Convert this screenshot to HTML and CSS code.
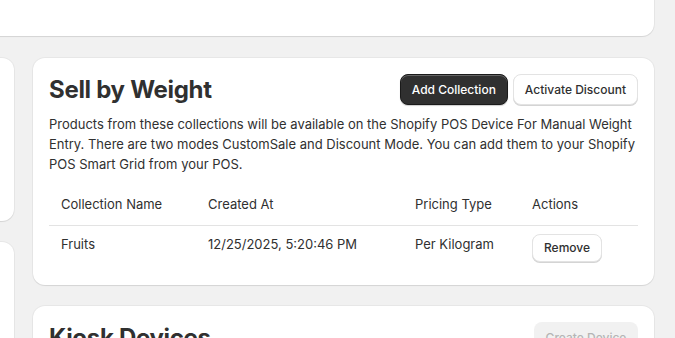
FILE: index.html
```html
<!DOCTYPE html>
<html lang="en">
<head>
<meta charset="utf-8">
<title>Sell by Weight</title>
<link rel="stylesheet" href="styles.css">
</head>
<body>
<div class="page">
  <section class="card top-card"></section>
  <div class="columns">
    <div class="col">
      <section class="card side-card-1"></section>
      <section class="card side-card-2"></section>
    </div>
    <div class="col">
      <section class="card">
        <div class="card-head">
          <h2 class="title">Sell by Weight</h2>
          <div class="btn-group">
            <button class="btn btn-primary">Add Collection</button>
            <button class="btn btn-secondary">Activate Discount</button>
          </div>
        </div>
        <p class="desc">Products from these collections will be available on the Shopify POS Device For Manual Weight Entry. There are two modes CustomSale and Discount Mode. You can add them to your Shopify POS Smart Grid from your POS.</p>
        <div class="table">
          <div class="tr th-row">
            <div class="cell">Collection Name</div>
            <div class="cell">Created At</div>
            <div class="cell">Pricing Type</div>
            <div class="cell">Actions</div>
          </div>
          <div class="tr td-row">
            <div class="cell">Fruits</div>
            <div class="cell">12/25/2025, 5:20:46 PM</div>
            <div class="cell">Per Kilogram</div>
            <div class="cell"><button class="btn btn-secondary btn-sm">Remove</button></div>
          </div>
        </div>
      </section>
      <section class="card kiosk-card">
        <div class="card-head">
          <h2 class="title">Kiosk Devices</h2>
          <div class="btn-group">
            <button class="btn btn-disabled" disabled>Create Device</button>
          </div>
        </div>
      </section>
    </div>
  </div>
</div>
</body>
</html>
```
FILE: styles.css
```css
* { box-sizing: border-box; }
html, body { margin: 0; padding: 0; }
body {
  background: #f1f1f1;
  font-family: Inter, "Noto Sans", sans-serif;
  color: #303030;
  font-size: 13px;
  line-height: 20px;
  overflow: hidden;
  height: 338px;
}
.page {
  display: flex;
  flex-direction: column;
  gap: 22px;
  margin: -64px 21px 0 -200px;
}
.card {
  background: #fff;
  border-radius: 12px;
  box-shadow: 0 1px 1px rgba(0,0,0,0.08), 0 0 0 1px rgba(0,0,0,0.04);
  padding: 16px;
}
.top-card { height: 100px; }
.columns {
  display: grid;
  grid-template-columns: 214px 621px;
  column-gap: 19px;
}
.col {
  display: flex;
  flex-direction: column;
  gap: 21px;
}
.side-card-1 { height: 163px; }
.side-card-2 { height: 200px; }
.card-head {
  display: flex;
  align-items: center;
  justify-content: space-between;
  height: 31px;
}
.title {
  margin: 0;
  font-size: 24px;
  line-height: 32px;
  font-weight: 700;
  letter-spacing: -0.3px;
  color: #303030;
}
.btn-group {
  display: flex;
  gap: 5px;
}
.btn {
  font-family: Inter, "Noto Sans", sans-serif;
  font-size: 12px;
  font-weight: 550;
  line-height: 16px;
  height: 31px;
  padding: 0 11px;
  border-radius: 8px;
  cursor: pointer;
  white-space: nowrap;
}
.btn-primary {
  background: #303030;
  color: #fff;
  border: 1px solid #1a1a1a;
  box-shadow: inset 0 1px 0 rgba(255,255,255,0.25), 0 1px 1px rgba(0,0,0,0.2);
}
.btn-secondary {
  background: #fff;
  color: #303030;
  border: 1px solid #e3e3e3;
  box-shadow: 0 1px 0 #d4d4d4;
}
.btn-sm {
  height: 28px;
  padding: 0 11px;
  font-weight: 500;
}
.btn-disabled {
  background: #f1f1f1;
  color: #b5b5b5;
  border: none;
  min-width: 104px;
}
.desc {
  margin: 9px 0 0;
}
.table {
  margin-top: 8px;
}
.tr {
  display: grid;
  grid-template-columns: 147px 207px 117px 1fr;
}
.th-row {
  border-bottom: 1px solid #e3e3e3;
}
.th-row .cell { padding: 12px 12px 11px; }
.td-row .cell { padding: 8px 12px 7px; }
```
